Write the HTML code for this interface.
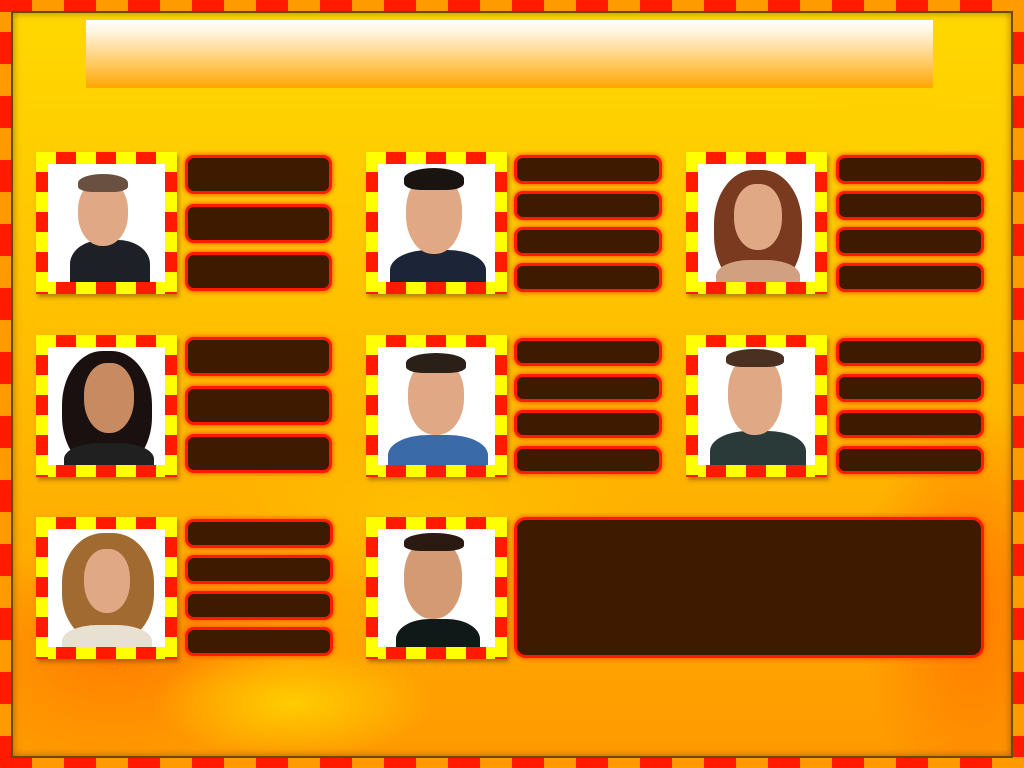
<!DOCTYPE html><html><head><style>
*{margin:0;padding:0;box-sizing:border-box}
body{width:1024px;height:768px;position:relative;overflow:hidden;background:#ff9a00}
.ob{position:absolute;left:0;top:0;width:1024px;height:768px;
background:repeating-linear-gradient(90deg,#ff1a00 0 32px,#ff9a00 32px 64px)}
.obv{position:absolute;left:0;top:0;width:1024px;height:768px;
background:repeating-linear-gradient(180deg,#ff9a00 0 32px,#ff1a00 32px 64px);
clip-path:polygon(0 12px,12px 12px,12px 757px,0 757px,0 12px,1012px 12px,1024px 12px,1024px 757px,1012px 757px,1012px 12px)}
.in{position:absolute;left:11px;top:11px;width:1002px;height:747px;border:2px solid #6a4a00;overflow:hidden;
background:
radial-gradient(ellipse 160px 90px at 880px 130px,#ffd000 0,transparent 70%),
radial-gradient(ellipse 200px 80px at 280px 690px,#ffcc00 0,transparent 70%),
radial-gradient(ellipse 160px 300px at 960px 600px,#ff7a00 0,transparent 70%),
radial-gradient(ellipse 260px 160px at 100px 640px,#ff7e00 0,transparent 70%),
radial-gradient(ellipse 300px 120px at 420px 500px,#ffc000 0,transparent 70%),
linear-gradient(180deg,#ffd800 0%,#ffc400 35%,#ffae00 70%,#ff9a00 100%);
box-shadow:inset 0 0 8px rgba(120,60,0,.6)}
.title{position:absolute;left:86px;top:20px;width:847px;height:68px;
background:linear-gradient(180deg,#fff 0%,#fff2d8 20%,#ffd27a 55%,#ffa600 100%)}
.fr{position:absolute;width:141px;height:142px;box-shadow:2px 3px 4px rgba(120,60,0,.5)}
.fr .h{position:absolute;left:0;right:0;height:12px;background:repeating-linear-gradient(90deg,#ffff00 0 20px,#ff1a00 20px 40px)}
.fr .v{position:absolute;top:0;bottom:0;width:12px;background:repeating-linear-gradient(180deg,#ffff00 0 20px,#ff1a00 20px 40px)}
.fr .p{position:absolute;left:12px;top:12px;right:12px;bottom:12px;background:#fff;overflow:hidden}
.head{position:absolute;border-radius:45% 45% 48% 48%;background:#e0a884}
.hair{position:absolute;border-radius:50% 50% 30% 30%}
.body{position:absolute;border-radius:40% 40% 0 0}
.b{position:absolute;background:#3d1a00;border:3px solid #ff1a00;border-radius:9px;box-shadow:0 0 4px 1px #ff5a00}
</style></head><body>
<div class="ob"></div><div class="obv"></div>
<div class="in"></div>
<div class="title"></div>

<div class="fr" style="left:36px;top:152px"><div class="h" style="top:0"></div><div class="h" style="bottom:0"></div><div class="v" style="left:0"></div><div class="v" style="right:0"></div>
<div class="p"><div class="body" style="left:22px;top:76px;width:80px;height:60px;background:#1e2028"></div><div class="head" style="left:30px;top:16px;width:50px;height:66px"></div><div class="hair" style="left:30px;top:10px;width:50px;height:18px;background:#6a5040"></div></div></div>

<div class="fr" style="left:366px;top:152px"><div class="h" style="top:0"></div><div class="h" style="bottom:0"></div><div class="v" style="left:0"></div><div class="v" style="right:0"></div>
<div class="p"><div class="body" style="left:12px;top:86px;width:96px;height:50px;background:#1c2438"></div><div class="head" style="left:28px;top:10px;width:56px;height:80px"></div><div class="hair" style="left:26px;top:4px;width:60px;height:22px;background:#1a1410"></div></div></div>

<div class="fr" style="left:686px;top:152px"><div class="h" style="top:0"></div><div class="h" style="bottom:0"></div><div class="v" style="left:0"></div><div class="v" style="right:0"></div>
<div class="p"><div class="hair" style="left:16px;top:6px;width:88px;height:120px;background:#7a3a20;border-radius:45%"></div><div class="body" style="left:18px;top:96px;width:84px;height:40px;background:#d0a080"></div><div class="head" style="left:36px;top:20px;width:48px;height:66px"></div></div></div>

<div class="fr" style="left:36px;top:335px"><div class="h" style="top:0"></div><div class="h" style="bottom:0"></div><div class="v" style="left:0"></div><div class="v" style="right:0"></div>
<div class="p"><div class="hair" style="left:14px;top:4px;width:90px;height:120px;background:#1a1010;border-radius:45%"></div><div class="body" style="left:16px;top:96px;width:90px;height:40px;background:#202020"></div><div class="head" style="left:36px;top:16px;width:50px;height:70px;background:#c88a60"></div></div></div>

<div class="fr" style="left:366px;top:335px"><div class="h" style="top:0"></div><div class="h" style="bottom:0"></div><div class="v" style="left:0"></div><div class="v" style="right:0"></div>
<div class="p"><div class="body" style="left:10px;top:88px;width:100px;height:50px;background:#3a6aa8"></div><div class="head" style="left:30px;top:12px;width:56px;height:76px"></div><div class="hair" style="left:28px;top:6px;width:60px;height:20px;background:#2a2018"></div></div></div>

<div class="fr" style="left:686px;top:335px"><div class="h" style="top:0"></div><div class="h" style="bottom:0"></div><div class="v" style="left:0"></div><div class="v" style="right:0"></div>
<div class="p"><div class="body" style="left:12px;top:84px;width:96px;height:50px;background:#2a3a38"></div><div class="head" style="left:30px;top:8px;width:54px;height:80px"></div><div class="hair" style="left:28px;top:2px;width:58px;height:18px;background:#4a3020"></div></div></div>

<div class="fr" style="left:36px;top:517px"><div class="h" style="top:0"></div><div class="h" style="bottom:0"></div><div class="v" style="left:0"></div><div class="v" style="right:0"></div>
<div class="p"><div class="hair" style="left:14px;top:4px;width:92px;height:110px;background:#a06a30;border-radius:45%"></div><div class="body" style="left:14px;top:96px;width:90px;height:40px;background:#e8e0d0"></div><div class="head" style="left:36px;top:20px;width:46px;height:64px"></div></div></div>

<div class="fr" style="left:366px;top:517px"><div class="h" style="top:0"></div><div class="h" style="bottom:0"></div><div class="v" style="left:0"></div><div class="v" style="right:0"></div>
<div class="p"><div class="body" style="left:18px;top:90px;width:84px;height:50px;background:#101818"></div><div class="head" style="left:26px;top:10px;width:58px;height:80px;background:#d49a74"></div><div class="hair" style="left:26px;top:4px;width:60px;height:18px;background:#2a1a12"></div></div></div>

<div class="b" style="left:185px;top:155px;width:147px;height:39px"></div>
<div class="b" style="left:185px;top:204px;width:147px;height:39px"></div>
<div class="b" style="left:185px;top:252px;width:147px;height:39px"></div>

<div class="b" style="left:514px;top:155px;width:148px;height:29px"></div>
<div class="b" style="left:514px;top:191px;width:148px;height:29px"></div>
<div class="b" style="left:514px;top:227px;width:148px;height:29px"></div>
<div class="b" style="left:514px;top:263px;width:148px;height:29px"></div>

<div class="b" style="left:836px;top:155px;width:148px;height:29px"></div>
<div class="b" style="left:836px;top:191px;width:148px;height:29px"></div>
<div class="b" style="left:836px;top:227px;width:148px;height:29px"></div>
<div class="b" style="left:836px;top:263px;width:148px;height:29px"></div>

<div class="b" style="left:185px;top:337px;width:147px;height:39px"></div>
<div class="b" style="left:185px;top:386px;width:147px;height:39px"></div>
<div class="b" style="left:185px;top:434px;width:147px;height:39px"></div>

<div class="b" style="left:514px;top:338px;width:148px;height:28px"></div>
<div class="b" style="left:514px;top:374px;width:148px;height:28px"></div>
<div class="b" style="left:514px;top:410px;width:148px;height:28px"></div>
<div class="b" style="left:514px;top:446px;width:148px;height:28px"></div>

<div class="b" style="left:836px;top:338px;width:148px;height:28px"></div>
<div class="b" style="left:836px;top:374px;width:148px;height:28px"></div>
<div class="b" style="left:836px;top:410px;width:148px;height:28px"></div>
<div class="b" style="left:836px;top:446px;width:148px;height:28px"></div>

<div class="b" style="left:185px;top:519px;width:148px;height:29px"></div>
<div class="b" style="left:185px;top:555px;width:148px;height:29px"></div>
<div class="b" style="left:185px;top:591px;width:148px;height:29px"></div>
<div class="b" style="left:185px;top:627px;width:148px;height:29px"></div>

<div class="b" style="left:514px;top:517px;width:470px;height:141px;border-radius:12px"></div>
</body></html>
